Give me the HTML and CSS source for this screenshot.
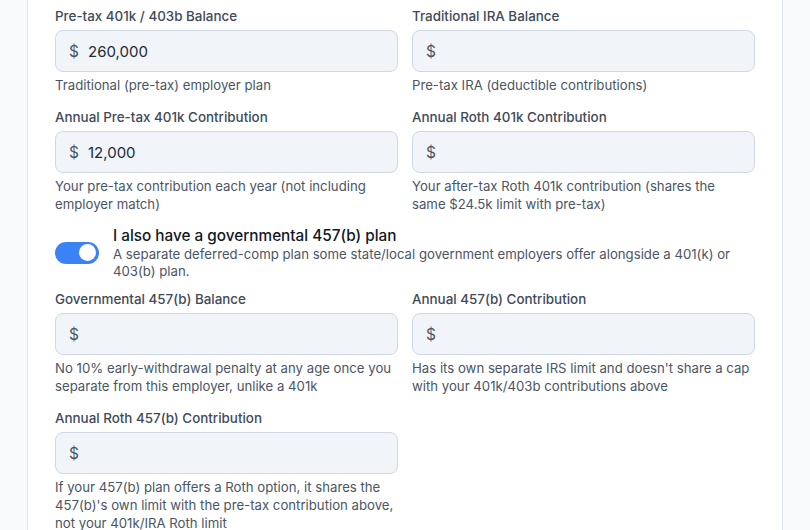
FILE: index.html
```html
<!DOCTYPE html>
<html lang="en">
<head>
<meta charset="utf-8">
<title>Retirement accounts</title>
<link rel="stylesheet" href="styles.css">
</head>
<body>
<div class="page">
  <div class="card">
    <div class="grid">
      <div class="field">
        <label class="label">Pre-tax 401k / 403b Balance</label>
        <div class="money"><span class="cur">$</span><input class="amount" type="text" value="260,000"></div>
        <p class="help">Traditional (pre-tax) employer plan</p>
      </div>
      <div class="field">
        <label class="label">Traditional IRA Balance</label>
        <div class="money"><span class="cur">$</span><input class="amount" type="text" value=""></div>
        <p class="help">Pre-tax IRA (deductible contributions)</p>
      </div>
      <div class="field">
        <label class="label">Annual Pre-tax 401k Contribution</label>
        <div class="money"><span class="cur">$</span><input class="amount" type="text" value="12,000"></div>
        <p class="help">Your pre-tax contribution each year (not including employer match)</p>
      </div>
      <div class="field">
        <label class="label">Annual Roth 401k Contribution</label>
        <div class="money"><span class="cur">$</span><input class="amount" type="text" value=""></div>
        <p class="help">Your after-tax Roth 401k contribution (shares the same $24.5k limit with pre-tax)</p>
      </div>
    </div>

    <div class="toggle-row">
      <span class="switch"><span class="knob"></span></span>
      <div class="toggle-text">
        <div class="toggle-title">I also have a governmental 457(b) plan</div>
        <div class="toggle-desc">A separate deferred-comp plan some state/local government employers offer alongside a 401(k) or 403(b) plan.</div>
      </div>
    </div>

    <div class="grid">
      <div class="field">
        <label class="label">Governmental 457(b) Balance</label>
        <div class="money"><span class="cur">$</span><input class="amount" type="text" value=""></div>
        <p class="help">No 10% early-withdrawal penalty at any age once you separate from this employer, unlike a 401k</p>
      </div>
      <div class="field">
        <label class="label">Annual 457(b) Contribution</label>
        <div class="money"><span class="cur">$</span><input class="amount" type="text" value=""></div>
        <p class="help">Has its own separate IRS limit and doesn't share a cap with your 401k/403b contributions above</p>
      </div>
      <div class="field">
        <label class="label">Annual Roth 457(b) Contribution</label>
        <div class="money"><span class="cur">$</span><input class="amount" type="text" value=""></div>
        <p class="help">If your 457(b) plan offers a Roth option, it shares the 457(b)'s own limit with the pre-tax contribution above, not your 401k/IRA Roth limit</p>
      </div>
    </div>
  </div>
</div>
</body>
</html>
```

FILE: styles.css
```css
* { box-sizing: border-box; }
html, body {
  margin: 0;
  padding: 0;
  background: #f8fafc;
  font-family: Inter, "Liberation Sans", sans-serif;
  overflow: hidden;
}
.page {
  padding: 0 27px;
}
.card {
  width: 756px;
  margin-top: -23px;
  background: #ffffff;
  border: 1px solid #dfe5ee;
  border-radius: 12px;
  padding: 28px 27px 40px;
}
.grid {
  display: grid;
  grid-template-columns: 343px 343px;
  column-gap: 14px;
  row-gap: 13px;
}
.field {
  display: flex;
  flex-direction: column;
}
.label {
  font-size: 13.4px;
  font-weight: 500;
  line-height: 20px;
  color: #414a58;
  margin-bottom: 4px;
}
.money {
  height: 42px;
  display: flex;
  align-items: center;
  background: #f1f5f9;
  border: 1px solid #cfd8e3;
  border-radius: 8px;
  padding: 0 13px;
}
.cur {
  font-size: 15.5px;
  color: #4b5563;
  width: 19px;
  flex: none;
}
.amount {
  flex: 1;
  min-width: 0;
  border: 0;
  background: transparent;
  outline: none;
  padding: 0;
  font-family: Inter, "Liberation Sans", sans-serif;
  font-size: 15px;
  color: #1f2937;
}
.help {
  margin: 4px 0 0;
  padding-right: 4px;
  font-size: 13.2px;
  line-height: 18px;
  color: #4b5563;
}
.toggle-row {
  display: flex;
  align-items: center;
  gap: 14px;
  margin: 12px 0 9px;
}
.switch {
  flex: none;
  width: 44px;
  height: 22px;
  border-radius: 11px;
  background: #3b82f6;
  display: flex;
  align-items: center;
  justify-content: flex-end;
  padding: 0 3px;
}
.knob {
  width: 17px;
  height: 17px;
  border-radius: 50%;
  background: #ffffff;
}
.toggle-title {
  font-size: 15.3px;
  font-weight: 500;
  line-height: 21px;
  color: #111827;
}
.toggle-desc {
  font-size: 13.2px;
  line-height: 17px;
  color: #4b5563;
}
```
